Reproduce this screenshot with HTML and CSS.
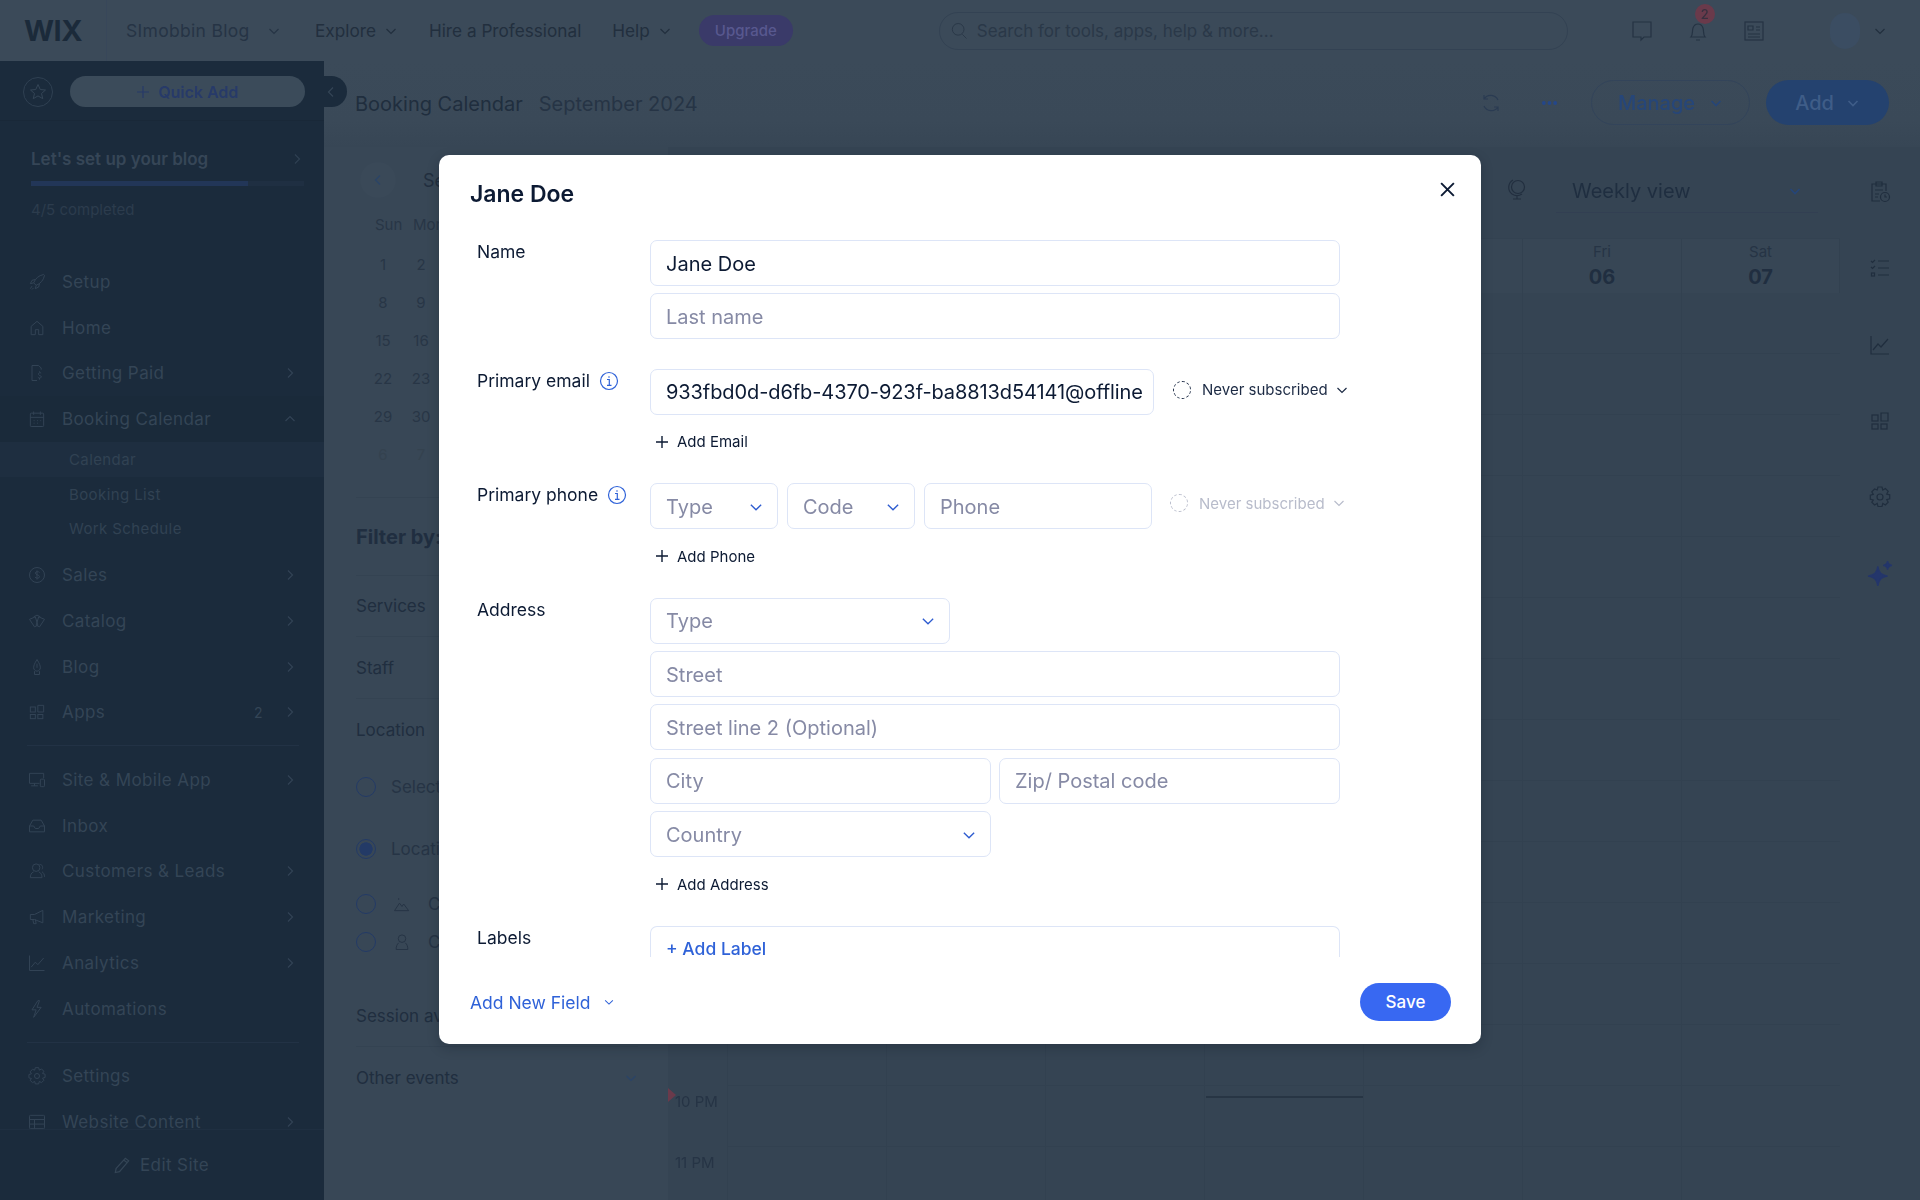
FILE: index.html
```html
<!DOCTYPE html>
<html lang="en">
<head>
<meta charset="utf-8">
<title>Booking Calendar</title>
<link rel="stylesheet" href="styles.css">
</head>
<body>
<svg class="defs" width="0" height="0">
	<symbol id="down" viewBox="0 0 14 14"><path d="M2.5 5l4.500 4.500L11.500 5"/></symbol>
	<symbol id="up" viewBox="0 0 14 14"><path d="M2.500 9L7 4.500 11.500 9"/></symbol>
	<symbol id="right" viewBox="0 0 14 14"><path d="M5 2.500L9.500 7 5 11.500"/></symbol>
	<symbol id="left" viewBox="0 0 14 14"><path d="M9 2.500L4.500 7 9 11.500"/></symbol>
	<symbol id="plus" viewBox="0 0 14 14"><path d="M7 1v12M1 7h12"/></symbol>
	<symbol id="dots" viewBox="0 0 18 6"><circle cx="3" cy="3" r="2"/><circle cx="9" cy="3" r="2"/><circle cx="15" cy="3" r="2"/></symbol>
	<symbol id="info" viewBox="0 0 20 20"><circle cx="10" cy="10" r="8.500"/><path d="M8 8.500h2.300V14M8 14.300h4.500M10 5.300v1.400"/></symbol>
	<symbol id="rocket" viewBox="0 0 24 24"><path d="M20 3c-6 1-10 5-12 10l3 3c5-2 9-6 10-12zM8 13l-4 1 2-4 4-1M11 16l-1 4 4-2 1-4M6 17l-2 3M8 19l-2 2"/></symbol>
	<symbol id="home" viewBox="0 0 24 24"><path d="M5 10l7-6 7 6v10h-5v-6h-4v6H5z"/></symbol>
	<symbol id="paid" viewBox="0 0 24 24"><path d="M12 21H6V3h8l3 3v2M17 12c-2-1-4 0-3 2s4 1 3 3-3 1-4 0M15 10v1M15 18v2"/></symbol>
	<symbol id="cal" viewBox="0 0 24 24"><rect x="4" y="5" width="16" height="16" rx="1"/><path d="M4 10h16M8 3v4M16 3v4M8 14h1M12 14h1M16 14h1M8 17h1M12 17h1"/></symbol>
	<symbol id="sales" viewBox="0 0 24 24"><circle cx="12" cy="12" r="9"/><path d="M15 9c-1-1.500-5-1.500-5 .8S15 11.500 15 14s-4 2.200-5.500.5M12 6.500v11"/></symbol>
	<symbol id="cards" viewBox="0 0 24 24"><path d="M3 10l7-3 3 10-4 2zM21 10l-7-3-3 10 4 2zM8 7l4-2 4 2"/></symbol>
	<symbol id="pen" viewBox="0 0 24 24"><path d="M12 3c-3 5-4 7-4 10 0 2 2 4 4 4s4-2 4-4c0-3-1-5-4-10zM12 8v5M9 17v4h6v-4"/></symbol>
	<symbol id="apps" viewBox="0 0 24 24"><rect x="4" y="6" width="6" height="6"/><rect x="4" y="15" width="6" height="5"/><rect x="13" y="15" width="6" height="5"/><path d="M13 4h7v8h-7z"/></symbol>
	<symbol id="screen" viewBox="0 0 24 24"><path d="M15 16H3V4h17v6M9 16v3M5 19h8"/><rect x="16" y="11" width="5" height="9" rx="1"/></symbol>
	<symbol id="inbox" viewBox="0 0 24 24"><path d="M7 5h10l4 7v7H3v-7zM3 12h5l2 3h4l2-3h5"/></symbol>
	<symbol id="people" viewBox="0 0 24 24"><circle cx="11" cy="8" r="4.500"/><path d="M8 13c-3 1-4 4-4 7h14c0-3-1-6-4-7M15 4c3 0 5 3 3 6M18 13c2 1 3 3 3 6"/></symbol>
	<symbol id="mega" viewBox="0 0 24 24"><path d="M4 9h5l10-5v15L9 15H4zM7 15l1 5h3l-1-5"/></symbol>
	<symbol id="chart" viewBox="0 0 24 24"><path d="M3 3v18h18M5 17l5-6 3 3 7-8"/></symbol>
	<symbol id="bolt" viewBox="0 0 24 24"><path d="M13 2L6 13h5l-3 9 9-12h-5l3-8z"/></symbol>
	<symbol id="gear" viewBox="0 0 24 24"><circle cx="12" cy="12" r="3"/><path d="M10 2h4l.8 3 2.600-1.500 2.800 2.800L18.700 9l3 .8v4l-3 .8 1.500 2.600-2.800 2.800-2.600-1.500-.8 3h-4l-.8-3-2.600 1.500-2.800-2.800L5.300 15l-3-.8v-4l3-.8-1.500-2.600 2.800-2.800L9.200 5z"/></symbol>
	<symbol id="table" viewBox="0 0 24 24"><rect x="3" y="4" width="18" height="16" rx="1"/><path d="M3 9h18M3 14.500h18M9 9v11"/></symbol>
	<symbol id="pencil" viewBox="0 0 24 24"><path d="M5 16L16 4l4 3L9 20l-5 1zM14 6l4 3"/></symbol>
	<symbol id="star" viewBox="0 0 24 24"><path d="M12 3l2.700 6 6.300.6-4.800 4.200 1.500 6.200L12 16.700 6.300 20l1.500-6.200L3 9.600 9.300 9z"/></symbol>
	<symbol id="search" viewBox="0 0 24 24"><circle cx="11" cy="10" r="7"/><path d="M16 16l5 5"/></symbol>
	<symbol id="chat" viewBox="0 0 24 24"><path d="M3 3h18v15h-7l-3 3v-3H3z"/></symbol>
	<symbol id="bell" viewBox="0 0 24 24"><path d="M5 18c2-2 1-6 2-9s3-4 5-4 4 1 5 4 0 7 2 9zM10 21h4"/></symbol>
	<symbol id="news" viewBox="0 0 24 24"><rect x="3" y="3" width="18" height="18"/><path d="M6 7h5v4H6zM14 8h4M14 11h4M6 15h12M6 18h12"/></symbol>
	<symbol id="sync" viewBox="0 0 24 24"><path d="M19 9a8 8 0 0 0-14-1M5 15a8 8 0 0 0 14 1M5 4v4h4M19 20v-4h-4"/></symbol>
	<symbol id="globe" viewBox="0 0 24 24"><circle cx="13" cy="9" r="6.500"/><path d="M8 2C3 5 2 12 7 16c3 2 7 2 10 0M12 18v3M8 21h8"/></symbol>
	<symbol id="report" viewBox="0 0 24 24"><path d="M12 21H4V4h14v7M8 2h6v4H8zM7 10h8M7 14h4M7 17h3"/><circle cx="17" cy="17" r="4.500"/><path d="M17 14.500V17h2"/></symbol>
	<symbol id="tasks" viewBox="0 0 24 24"><path d="M3 5l1.500 1.500L7 4M3 11l1.500 1.500L7 10M10 5h11M10 12h11M10 19h11"/><rect x="3.500" y="17" width="3" height="3"/></symbol>
	<symbol id="spark" viewBox="0 0 24 24"><path d="M10 5c1 6 3 8 9 9-6 1-8 3-9 9-1-6-3-8-9-9 6-1 8-3 9-9zM19 0c.4 2.500 1.500 3.600 4 4-2.500.4-3.600 1.500-4 4-.4-2.500-1.500-3.600-4-4 2.500-.4 3.600-1.500 4-4z"/></symbol>
	<symbol id="hill" viewBox="0 0 24 24"><path d="M3 20l6-9 3 4 2-3 6 8zM8 5v2"/></symbol>
	<symbol id="person" viewBox="0 0 24 24"><circle cx="12" cy="8" r="4.500"/><path d="M8 13c-2 2-3 4-3 8h14c0-4-1-6-3-8"/></symbol>
</svg>

<div class="app">
	<header class="topbar">
		<div class="logo">WIX</div>
		<div class="site">SImobbin Blog <svg class="ic ic-14"><use href="#down"/></svg></div>
		<nav class="topnav">
			<span>Explore <svg class="ic ic-14"><use href="#down"/></svg></span>
			<span>Hire a Professional</span>
			<span>Help <svg class="ic ic-14"><use href="#down"/></svg></span>
		</nav>
		<div class="upgrade">Upgrade</div>
		<div class="search"><svg class="ic ic-20"><use href="#search"/></svg>Search for tools, apps, help &amp; more...</div>
		<div class="top-icons">
			<svg class="ic ic-24"><use href="#chat"/></svg>
			<span class="bell"><svg class="ic ic-24"><use href="#bell"/></svg><b class="badge">2</b></span>
			<svg class="ic ic-24"><use href="#news"/></svg>
		</div>
		<div class="avatar-wrap"><span class="avatar"></span><svg class="ic ic-14"><use href="#down"/></svg></div>
	</header>

	<div class="body">
		<aside class="sidebar">
			<div class="quick">
				<span class="star"><svg class="ic ic-20"><use href="#star"/></svg></span>
				<div class="quick-btn"><svg class="ic ic-14"><use href="#plus"/></svg>Quick Add</div>
				<span class="collapse"><svg class="ic ic-14"><use href="#left"/></svg></span>
			</div>
			<div class="setup">
				<div class="setup-title">Let's set up your blog <svg class="ic ic-14"><use href="#right"/></svg></div>
				<div class="progress"><i></i></div>
				<div class="setup-count">4/5 completed</div>
			</div>
			<ul class="side-menu">
				<li><svg class="ic ic-24"><use href="#rocket"/></svg>Setup</li>
				<li><svg class="ic ic-24"><use href="#home"/></svg>Home</li>
				<li><svg class="ic ic-24"><use href="#paid"/></svg>Getting Paid<svg class="ic ic-14 go"><use href="#right"/></svg></li>
				<li class="open"><svg class="ic ic-24"><use href="#cal"/></svg>Booking Calendar<svg class="ic ic-14 go"><use href="#up"/></svg></li>
				<li class="sub current">Calendar</li>
				<li class="sub">Booking List</li>
				<li class="sub last">Work Schedule</li>
				<li><svg class="ic ic-24"><use href="#sales"/></svg>Sales<svg class="ic ic-14 go"><use href="#right"/></svg></li>
				<li><svg class="ic ic-24"><use href="#cards"/></svg>Catalog<svg class="ic ic-14 go"><use href="#right"/></svg></li>
				<li><svg class="ic ic-24"><use href="#pen"/></svg>Blog<svg class="ic ic-14 go"><use href="#right"/></svg></li>
				<li class="end"><svg class="ic ic-24"><use href="#apps"/></svg>Apps<span class="count">2</span><svg class="ic ic-14 go"><use href="#right"/></svg></li>
				<li><svg class="ic ic-24"><use href="#screen"/></svg>Site &amp; Mobile App<svg class="ic ic-14 go"><use href="#right"/></svg></li>
				<li><svg class="ic ic-24"><use href="#inbox"/></svg>Inbox</li>
				<li><svg class="ic ic-24"><use href="#people"/></svg>Customers &amp; Leads<svg class="ic ic-14 go"><use href="#right"/></svg></li>
				<li><svg class="ic ic-24"><use href="#mega"/></svg>Marketing<svg class="ic ic-14 go"><use href="#right"/></svg></li>
				<li><svg class="ic ic-24"><use href="#chart"/></svg>Analytics<svg class="ic ic-14 go"><use href="#right"/></svg></li>
				<li class="end"><svg class="ic ic-24"><use href="#bolt"/></svg>Automations</li>
				<li><svg class="ic ic-24"><use href="#gear"/></svg>Settings</li>
				<li><svg class="ic ic-24"><use href="#table"/></svg>Website Content<svg class="ic ic-14 go"><use href="#right"/></svg></li>
			</ul>
			<div class="edit-site"><svg class="ic ic-20"><use href="#pencil"/></svg>Edit Site</div>
		</aside>

		<main class="main">
			<div class="title-row">
				<h1>Booking Calendar</h1>
				<span class="month">September 2024</span>
				<div class="actions">
					<svg class="ic ic-24"><use href="#sync"/></svg>
					<svg class="dots"><use href="#dots"/></svg>
					<div class="btn-manage">Manage <svg class="ic ic-14"><use href="#down"/></svg></div>
					<div class="btn-add">Add <svg class="ic ic-14"><use href="#down"/></svg></div>
				</div>
			</div>
			<div class="content">
				<section class="left">
					<div class="mini-nav"><span class="prev"><svg class="ic ic-14"><use href="#left"/></svg></span>Se</div>
					<div class="mini-cal">
						<span class="wd">Sun</span><span class="wd">Mon</span>
						<span>1</span><span>2</span>
						<span>8</span><span>9</span>
						<span>15</span><span>16</span>
						<span>22</span><span>23</span>
						<span>29</span><span>30</span>
						<span class="off">6</span><span class="off">7</span>
					</div>
					<div class="filter-title">Filter by:</div>
					<div class="filter">Services</div>
					<div class="filter">Staff</div>
					<div class="filter plain">Location</div>
					<div class="radio-row tall"><i class="radio"></i>Select</div>
					<div class="radio-row tall"><i class="radio on"></i>Location</div>
					<div class="radio-row"><i class="radio"></i><svg class="ic ic-20"><use href="#hill"/></svg>Custom</div>
					<div class="radio-row"><i class="radio"></i><svg class="ic ic-20"><use href="#person"/></svg>Client</div>
					<div class="filter session">Session availability</div>
					<div class="filter plain">Other events<svg class="ic ic-14 go"><use href="#down"/></svg></div>
				</section>
				<section class="cal">
					<div class="view-row">
						<svg class="ic ic-24"><use href="#globe"/></svg>
						<div class="view-select">Weekly view<svg class="ic ic-14"><use href="#down"/></svg></div>
					</div>
					<div class="cal-head">
						<div class="day fri"><span>Fri</span><b>06</b></div>
						<div class="day sat"><span>Sat</span><b>07</b></div>
					</div>
					<div class="cal-body">
						<div class="hours"><span class="now">10 PM</span><span>11 PM</span></div>
						<div class="grid"><i class="now-line"></i></div>
					</div>
				</section>
				<section class="rail">
					<svg class="ic ic-24"><use href="#report"/></svg>
					<svg class="ic ic-24"><use href="#tasks"/></svg>
					<svg class="ic ic-24"><use href="#chart"/></svg>
					<svg class="ic ic-24"><use href="#apps"/></svg>
					<svg class="ic ic-24"><use href="#gear"/></svg>
					<svg class="ic ic-24 fill"><use href="#spark"/></svg>
				</section>
			</div>
		</main>
	</div>
</div>

<div class="modal">
	<div class="modal-head">
		<h2>Jane Doe</h2>
		<svg class="ic close"><use href="#plus"/></svg>
	</div>
	<div class="modal-scroll">
		<div class="row">
			<div class="label">Name</div>
			<div class="stack">
				<div class="field filled">Jane Doe</div>
				<div class="field">Last name</div>
			</div>
		</div>
		<div class="row">
			<div class="label">Primary email <svg class="ic info"><use href="#info"/></svg></div>
			<div class="stack">
				<div class="line">
					<div class="field filled email">933fbd0d-d6fb-4370-923f-ba8813d54141@offline</div>
					<div class="status"><i class="dash"></i>Never subscribed<svg class="ic ic-14"><use href="#down"/></svg></div>
				</div>
				<div class="add"><svg class="ic ic-14"><use href="#plus"/></svg>Add Email</div>
			</div>
		</div>
		<div class="row">
			<div class="label">Primary phone <svg class="ic info"><use href="#info"/></svg></div>
			<div class="stack">
				<div class="line phone">
					<div class="field select w-128">Type<svg class="ic ic-14"><use href="#down"/></svg></div>
					<div class="field select w-128">Code<svg class="ic ic-14"><use href="#down"/></svg></div>
					<div class="field w-228">Phone</div>
					<div class="status off"><i class="dash"></i>Never subscribed<svg class="ic ic-14"><use href="#down"/></svg></div>
				</div>
				<div class="add"><svg class="ic ic-14"><use href="#plus"/></svg>Add Phone</div>
			</div>
		</div>
		<div class="row">
			<div class="label">Address</div>
			<div class="stack">
				<div class="field select w-300">Type<svg class="ic ic-14"><use href="#down"/></svg></div>
				<div class="field">Street</div>
				<div class="field">Street line 2 (Optional)</div>
				<div class="line">
					<div class="field half">City</div>
					<div class="field half">Zip/ Postal code</div>
				</div>
				<div class="field select half">Country<svg class="ic ic-14"><use href="#down"/></svg></div>
				<div class="add"><svg class="ic ic-14"><use href="#plus"/></svg>Add Address</div>
			</div>
		</div>
		<div class="row last-row">
			<div class="label">Labels</div>
			<div class="stack">
				<div class="field labels">+ Add Label</div>
			</div>
		</div>
	</div>
	<div class="modal-foot">
		<div class="add-field">Add New Field<svg class="ic ic-14"><use href="#down"/></svg></div>
		<div class="save">Save</div>
	</div>
</div>
</body>
</html>
```

FILE: styles.css
```css
* {margin:0; padding:0; box-sizing:border-box}
ul {list-style:none}
body {width:1920px; height:1200px; overflow:hidden; background:#354453; font-family:"Inter","Liberation Sans",sans-serif; color:#1f2e3f}
.defs {position:absolute}

/* icons */
.ic {fill:none; stroke:currentColor; stroke-width:1.2; flex:none; vertical-align:middle}
.ic-14 {width:14px; height:14px}
.ic-20 {width:20px; height:20px}
.ic-24 {width:24px; height:24px}

/* page behind the dialog, drawn in its dimmed colours */
.app {width:1920px; height:1200px; display:flex; flex-direction:column; filter:blur(.7px)}

.topbar {height:61px; flex:none; display:flex; align-items:center; background:#3b4a59; color:#222f3e; font-size:17.200px}
.logo {width:107px; padding-left:24px; font-size:29px; line-height:61px; font-weight:700; letter-spacing:-.5px; color:#1b2a3a; border-right:1px solid #38475a}
.site {width:200px; padding-left:19px; display:flex; gap:17px; align-items:center; font-size:17.500px; letter-spacing:.3px; color:#263445; white-space:nowrap}
.topnav {display:flex; gap:31px; margin-left:8px; white-space:nowrap}
.topnav span {display:flex; gap:8px; align-items:center}
.upgrade {width:94px; height:31px; margin-left:27px; border-radius:16px; background:#3a3a69; color:#58588f; font-size:15px; font-weight:500; line-height:31px; text-align:center}
.search {width:629px; height:38px; margin-left:146px; padding-left:9px; display:flex; gap:8px; align-items:center; border:1px solid #334253; border-radius:19px; font-size:17px; color:#2a3848; white-space:nowrap}
.top-icons {display:flex; gap:32px; margin-left:62px; align-items:center; color:#253343}
.bell {position:relative; height:24px}
.badge {position:absolute; left:9px; top:-15px; width:20px; height:20px; border-radius:50%; background:#6a3a4b; color:#38303f; font-size:13px; line-height:20px; text-align:center; font-weight:500}
.avatar-wrap {margin-left:64px; display:flex; gap:13px; align-items:center}
.avatar {width:30px; height:36px; border-radius:15px; background:#3b4d62}

.body {flex:1; display:flex; min-height:0}

.sidebar {width:324px; flex:none; background:#1b2b3c; color:#344556; font-size:17px; letter-spacing:.4px; display:flex; flex-direction:column}
.quick {height:60px; flex:none; padding:15px 0 0 23px; display:flex; gap:17px; position:relative; border-bottom:1px solid #192838}
.star {width:30px; height:30px; margin-top:1px; border:1px solid #2f4052; border-radius:50%; display:flex; align-items:center; justify-content:center}
.quick-btn {width:235px; height:31px; border-radius:16px; background:#3b4b5a; color:#273a69; font-size:16px; font-weight:600; letter-spacing:0; display:flex; gap:8px; align-items:center; justify-content:center}
.collapse {position:absolute; left:324px; top:15px; width:23px; height:31px; border-radius:0 16px 16px 0; background:#1b2b3c; display:flex; align-items:center}
.setup {height:138px; flex:none; padding:28px 20px 0 31px}
.setup-title {display:flex; justify-content:space-between; align-items:center; font-size:17px; font-weight:600; letter-spacing:0; color:#364657}
.setup-title .ic {color:#2f4052}
.progress {height:5px; margin-top:12px; background:#1f2f42}
.progress i {display:block; width:217px; height:5px; background:#223658}
.setup-count {margin-top:14px; font-size:15px; letter-spacing:0; color:#2c3c4d}

.side-menu {flex:1; min-height:0}
.side-menu li {height:45.800px; padding:0 27px 0 25px; display:flex; align-items:center; gap:13px; white-space:nowrap}
.side-menu .ic {color:#324355}
.side-menu .ic-24 {width:20px; height:20px; margin:0 2px}
.side-menu .go {margin-left:auto}
.side-menu .open {background:#1a2a3a}
.side-menu .sub {height:34.500px; padding-left:69px; font-size:15px; color:#314253}
.side-menu .current {height:35px; background:#1e2e40}
.side-menu .last {margin-bottom:6px}
.side-menu .end {margin-bottom:21.500px; position:relative}
.side-menu .end:after {content:""; position:absolute; left:27px; right:25px; bottom:-11px; border-bottom:1px solid #223245}
.count {margin-left:auto; font-size:14px}
.count + .ic.go {margin-left:7px}
.edit-site {height:71px; flex:none; position:relative; border-top:1px solid #1f2f41; display:flex; gap:8px; align-items:center; justify-content:center; padding-right:3px}
.edit-site .ic {stroke-width:1.500}

.main {flex:1; display:flex; flex-direction:column; min-width:0}
.title-row {height:86px; flex:none; display:flex; align-items:center; padding:0 31px 0 31px; font-size:20px; background:linear-gradient(#3b4a59,#3a4958 70%,#374655)}
.title-row h1 {font-size:20px; font-weight:400; color:#202e3e}
.month {margin-left:16px; color:#263445}
.actions {margin-left:auto; margin-top:-3px; display:flex; align-items:center; color:#2a3b52}
.dots {width:17px; height:6px; margin:0 33px 0 38px; fill:#24478a}
.actions .ic-14 {stroke-width:1.600}
.btn-manage {width:159px; height:45px; border:1px solid #33445a; border-radius:23px; display:flex; gap:14px; align-items:center; justify-content:center; color:#264679; font-weight:500}
.btn-add {width:123px; height:45px; margin-left:16px; border-radius:23px; background:#24426f; color:#3f5d88; display:flex; gap:12px; align-items:center; justify-content:center; font-weight:500}

.content {flex:1; display:flex; min-height:0}
.left {width:344px; flex:none; padding:15px 30px 0 32px; background:#384756; font-size:17px}
.mini-nav {height:36px; display:flex; align-items:center; gap:27px; font-size:18px; color:#222f3f}
.prev {width:36px; height:36px; margin-left:4px; display:flex; align-items:center; justify-content:center; color:#2a4468; border-radius:50%; background:#3a4958}
.mini-cal {margin:17px 0 23px 8px; width:76px; display:grid; grid-template-columns:38px 38px; grid-template-rows:31px; grid-auto-rows:38px; font-size:15px; color:#283646}
.mini-cal span {text-align:center; line-height:38px}
.mini-cal .wd {text-align:left; padding-left:11px; line-height:20px; white-space:nowrap}
.mini-cal .off {color:#34424f}
.filter-title {height:59px; padding-top:19px; border-top:1px solid #344352; font-size:20px; font-weight:700; line-height:40px; color:#202e40}
.filter {height:62px; color:#202e3f; display:flex; align-items:center; border-bottom:1px solid #344352}
.filter-title + .filter {margin-top:19px; border-top:1px solid #344352}
.filter.plain {border-bottom:0}
.filter .go {margin-left:auto; color:#2a4468}
.session {margin-top:24px}
.radio-row {height:38px; display:flex; align-items:center; gap:16px; color:#263445; white-space:nowrap}
.radio-row.tall {height:52px; margin-bottom:10px; gap:15px}
.radio {width:20px; height:20px; flex:none; border:1.500px solid #233a66; border-radius:50%}
.radio.on {background:radial-gradient(#233a66 50%,#384756 55%)}

.cal {width:1172px; flex:none; display:flex; flex-direction:column}
.view-row {height:91px; flex:none; display:flex; align-items:flex-start; padding:31px 22px 0 0; justify-content:flex-end; gap:27px; color:#222f3f}
.view-select {width:262px; height:43px; display:flex; align-items:center; justify-content:space-between; padding:0 16px; font-size:20px; margin-top:-8px; border-bottom:1px solid #323f52; color:#1f2e40}
.view-select .ic {color:#264679; stroke-width:1.600}
.cal-head {height:55px; flex:none; display:grid; grid-template-columns:59px repeat(7,159px); color:#263445; background:#374655; border-top:1px solid #334251}
.day {text-align:center; border-left:1px solid #324150; font-size:15px; padding-top:3px}
.day span {display:block; line-height:20px}
.day b {display:block; font-size:20px; line-height:30px; color:#202e40}
.fri {grid-column:7}
.sat {grid-column:8; border-right:1px solid #324150}
.cal-body {flex:1; display:flex; min-height:0}
.hours {width:59px; flex:none; padding:797px 0 0 7px; font-size:15px; color:#263445}
.hours span {display:block; height:61px; line-height:24px; white-space:nowrap; position:relative}
.now:before {content:""; position:absolute; left:-7px; top:-2px; border-left:8px solid #6a3a4b; border-top:7px solid transparent; border-bottom:7px solid transparent}
.grid {width:1113px; position:relative; background:
	repeating-linear-gradient(#0000 0 60px,#324150 60px 61px),
	repeating-linear-gradient(90deg,#324150 0 1px,#0000 1px 159px)}
.now-line {position:absolute; left:479px; top:803px; width:157px; border-top:2px solid #273544}

.rail {flex:1; padding-top:33px; display:flex; flex-direction:column; align-items:center; gap:52.300px; color:#202e3e}
.fill {color:#24366b; fill:#24366b; width:26px; height:26px}

/* dialog */
.modal {position:absolute; left:439px; top:155px; width:1042px; height:889px; background:#fff; border-radius:10px; display:flex; flex-direction:column; color:#0c1a33; box-shadow:0 4px 12px rgba(10,20,30,.25)}
.modal-head {height:85px; flex:none; padding:22px 23px 0 31px; display:flex; justify-content:space-between; align-items:flex-start}
.modal-head h2 {font-size:23px; font-weight:600; line-height:34px}
.close {width:21px; height:21px; margin-top:2px; stroke-width:1.300; transform:rotate(45deg)}
.modal-scroll {height:718px; flex:none; overflow:hidden; padding-left:38px}
.row {display:flex; margin-bottom:29.500px}
.last-row {margin-bottom:0}
.label {width:173px; flex:none; font-size:17.500px; line-height:22px; display:flex; gap:8px; align-items:center; height:24px; white-space:nowrap}
.info {width:20px; height:20px; color:#2f62d8; margin-left:1px}
.stack {width:690px; display:flex; flex-direction:column; gap:7.330px}
.line {display:flex; gap:8px; align-items:flex-start}
.field {height:46px; flex:none; padding:1px 15px 0; border:1px solid #dde5f7; border-radius:7px; display:flex; align-items:center; justify-content:space-between; font-size:20px; color:#868aa5; background:#fff; white-space:nowrap; overflow:hidden}
.field.filled {color:#0c1a33}
.email {width:504px; justify-content:flex-start; letter-spacing:-.09px}
.select {padding-right:13px}
.select .ic {color:#2f5dd0; width:16px; height:16px}
.w-128 {width:128px}
.w-228 {width:228px}
.w-300 {width:300px}
.half {width:341px}
.phone {gap:9px}
.status {display:flex; align-items:center; gap:11px; height:22px; margin:10px 0 0 11px; font-size:15px; color:#1c2a44; white-space:nowrap}
.status .ic {margin-left:-4px}
.status.off {color:#b8bccb; margin:3px 0 0 9px; height:43px; padding-bottom:9px}
.dash {width:18px; height:18px; border:1.300px dashed currentColor; border-radius:50%; flex:none}
.add {height:24px; margin-top:7.670px; padding-left:5px; display:flex; align-items:center; gap:8px; font-size:15px; color:#0c1a33}
.add .ic {stroke-width:1.400}
.labels {height:31px; justify-content:flex-start; align-items:flex-start; padding-top:14px; border-bottom:0; font-size:17.500px; font-weight:500; color:#2f62d8; line-height:16px; border-radius:7px 7px 0 0}
.modal-foot {flex:1; display:flex; align-items:center; justify-content:space-between; padding:2px 30px 0 31px}
.add-field {display:flex; align-items:center; gap:13px; font-size:17.500px; color:#2f62d8}
.add-field .ic {width:12px; height:12px}
.save {width:91px; height:38px; border-radius:19px; background:#3868f2; color:#fff; font-size:17px; font-weight:500; line-height:38px; text-align:center}
```
